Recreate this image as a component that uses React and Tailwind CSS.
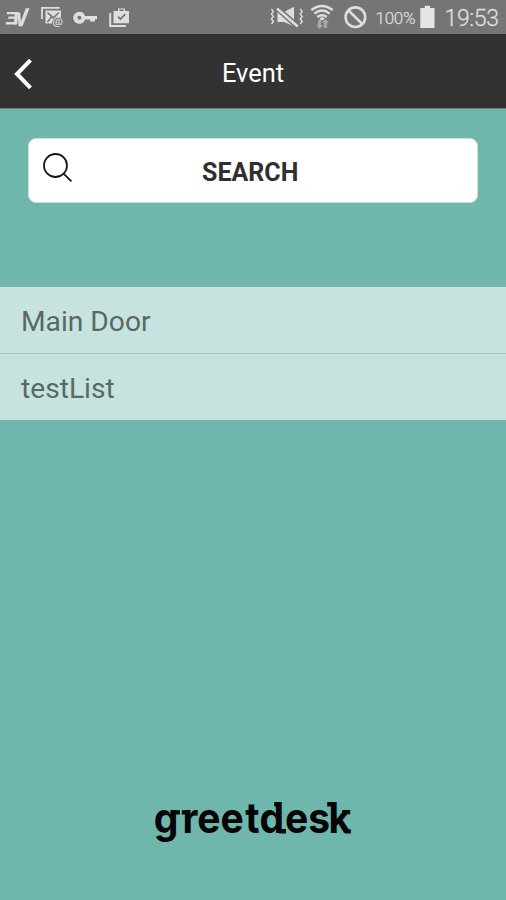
function StatusBar() {
  return (
    <div className="flex h-[34px] w-full shrink-0 bg-[#757575]">
      <svg width="506" height="34" viewBox="0 0 506 34" fontFamily="Roboto, sans-serif" fill="#dedede">
        {/* VPN mark */}
        <path d="M7 12H18L17.6 14.2H6.6ZM8.5 16.6H17L16.6 18.8H8.1ZM6 22H16L15.6 24.5H5.6Z" />
        <path d="M14.8 12H18L17.3 24.5H14Z" />
        <path d="M17.5 12.5H20.2L20.8 21.5L25.8 8.2H29.5L22.5 26.3H18.6Z" />
        {/* Mail */}
        <path d="M42 19V7.8H59.5" fill="none" stroke="#dedede" strokeWidth="1.8" />
        <path d="M45.5 10.5H61V17H57Q52 18 52 23.5H45.5Z" />
        <path d="M47.5 12.5L53.2 17.8L59 12.5M47.5 22L51.5 17" fill="none" stroke="#757575" strokeWidth="1.6" />
        <text x="52.6" y="25" fontSize="11.5" fontWeight="500">@</text>
        {/* Key */}
        <path fillRule="evenodd" d="M79.2 11.8A6 6 0 0 1 85 16H97V19.2H95V21.4H90V19.4H85A6 6 0 1 1 79.2 11.8ZM79.4 15.7A2 2 0 1 0 79.4 19.7A2 2 0 1 0 79.4 15.7Z" />
        {/* Checked bag */}
        <path d="M110.2 13V26H126" fill="none" stroke="#dedede" strokeWidth="2" />
        <path fillRule="evenodd" d="M113.5 11H118V8.4H125V11H129V23.2H113.5ZM119.4 11H123.6V9.6H119.4Z" />
        <path d="M118 16.7L120.4 19.1L125.3 14.2" fill="none" stroke="#757575" strokeWidth="1.7" />
        {/* Muted speaker */}
        <path d="M277.5 12H284L294 6.8V26.2L284 22H277.5Z" />
        <path d="M276 9.5L296 27.5M278.5 7L298.5 25" stroke="#757575" strokeWidth="2" />
        <path d="M277 8.5L297.8 26.5" stroke="#dedede" strokeWidth="2.4" />
        <path d="M271.4 9L273.4 11.5L271.4 14L273.4 16.5L271.4 19L273.4 21.5L271.4 24M300.2 9L302.2 11.5L300.2 14L302.2 16.5L300.2 19L302.2 21.5L300.2 24" fill="none" stroke="#dedede" strokeWidth="1.4" />
        {/* Wifi */}
        <path d="M311.3 10Q322 1.8 332.7 10M314.3 13.6Q322 7.5 329.7 13.6M317.3 17Q322 13.5 326.7 17" fill="none" stroke="#dedede" strokeWidth="2.4" />
        <path d="M319.2 18.5L322 17L324.8 18.5L322 20.8Z" />
        <path d="M318 20H321V25H323L319.5 29L316 25H318ZM323.8 28V23H322L325.5 19L329 23H327V28Z" fill="#a8a8a8" />
        {/* Blocked */}
        <circle cx="355.4" cy="17.2" r="9.8" fill="none" stroke="#dedede" strokeWidth="2.6" />
        <path d="M348.5 10.5L362.3 24" stroke="#dedede" strokeWidth="2.6" />
        <text x="375.5" y="24" fontSize="17" fontWeight="300" stroke="#dedede" strokeWidth="0.25" textLength="40">100%</text>
        {/* Battery */}
        <path d="M420.3 8H424.8V5.8H430V8H434.5V28H420.3Z" fill="#e6e6e6" />
        <text x="444.5" y="26" fontSize="23" fontWeight="300" stroke="#dedede" strokeWidth="0.3" textLength="54.5">19:53</text>
      </svg>
    </div>
  );
}

function Wordmark() {
  return (
    <svg className="overflow-visible" width="210" height="80" viewBox="148 782 210 80" fill="#050505" fontFamily="Inter, sans-serif" fontWeight="700" fontSize="42">
      <text transform="scale(0.93 1)" y="833.3" x="165.4 196.2 212 237.1 263.6 279 306.5 331.5 353.2">greetdesk</text>
      {/* Slab ends */}
      <path d="M172.5 810.2H180V814.6H172.5ZM181.8 810.2H188V814.6H181.8ZM274.2 802H281V806.4H274.2ZM279 829.1H286V833.4H279ZM327.2 802H334V806.4H327.2ZM342 810.2H350.2V814.3H342ZM345 829.2H350.8V833.4H345Z" />
    </svg>
  );
}

export default function App() {
  return (
    <div className="flex h-[900px] w-[506px] flex-col overflow-hidden bg-[#6fb7ad] font-[Roboto,sans-serif]">
      <StatusBar />
      <header className="grid h-[75px] shrink-0 grid-cols-[1fr_auto_1fr] items-center border-b border-[#77757a] bg-[#323232] text-white">
        <svg className="mt-[3px]" width="40" height="40" viewBox="0 0 40 40" fill="none" stroke="white" strokeWidth="4">
          <path d="M30.5 7.2L17 21L30.5 34.8" />
        </svg>
        <h1 className="pt-[4px] text-[25.4px] leading-[30px]">Event</h1>
      </header>
      <div className="mx-7 mt-[29px] flex h-[65px] shrink-0 items-center rounded-lg border border-[#c5e2de] bg-white">
        <svg className="ml-[13px]" width="32" height="42" viewBox="0 0 32 42" fill="none" stroke="#171717" strokeWidth="1.8">
          <circle cx="13.5" cy="15.5" r="11.5" />
          <path d="M21.5 23.7L29.5 31.3" />
        </svg>
        <span className="ml-[128px] pt-[4px] text-[25px] font-bold leading-[30px] text-[#2f2f2f]">SEARCH</span>
      </div>
      <ul className="mt-[84px] shrink-0 bg-[#c7e3df] text-[28.2px] leading-[32px] text-[#5a6866]">
        <li className="flex h-[67px] items-center border-b border-[#a0cbc6] pl-[21px] pt-[4px]">Main Door</li>
        <li className="flex h-[66px] items-center pl-[21px] pt-[4px]">testList</li>
      </ul>
      <footer className="mt-auto flex justify-center pb-[38px]">
        <Wordmark />
      </footer>
    </div>
  );
}
